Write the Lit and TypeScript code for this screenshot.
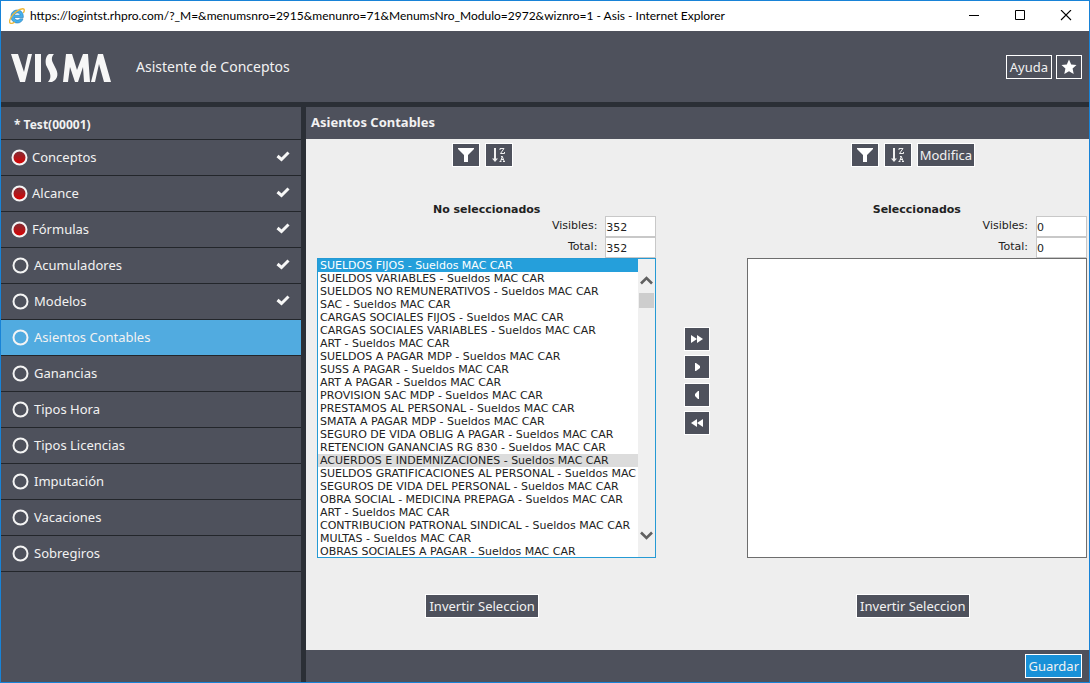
import { LitElement, html, css, svg, nothing } from "lit";
import { customElement, property, state } from "lit/decorators.js";
import { classMap } from "lit/directives/class-map.js";

const ACCOUNTS = [
  "SUELDOS FIJOS", "SUELDOS VARIABLES", "SUELDOS NO REMUNERATIVOS", "SAC",
  "CARGAS SOCIALES FIJOS", "CARGAS SOCIALES VARIABLES", "ART", "SUELDOS A PAGAR MDP",
  "SUSS A PAGAR", "ART A PAGAR", "PROVISION SAC MDP", "PRESTAMOS AL PERSONAL",
  "SMATA A PAGAR MDP", "SEGURO DE VIDA OBLIG A PAGAR", "RETENCION GANANCIAS RG 830",
  "ACUERDOS E INDEMNIZACIONES", "SUELDOS GRATIFICACIONES AL PERSONAL",
  "SEGUROS DE VIDA DEL PERSONAL", "OBRA SOCIAL - MEDICINA PREPAGA", "ART",
  "CONTRIBUCION PATRONAL SINDICAL", "MULTAS", "OBRAS SOCIALES A PAGAR",
].map((name) => `${name} - Sueldos MAC CAR`);

interface Step { name: string; required?: boolean; done?: boolean }

const STEPS: Step[] = [
  { name: "Conceptos", required: true, done: true },
  { name: "Alcance", required: true, done: true },
  { name: "Fórmulas", required: true, done: true },
  { name: "Acumuladores", done: true },
  { name: "Modelos", done: true },
  { name: "Asientos Contables" },
  { name: "Ganancias" },
  { name: "Tipos Hora" },
  { name: "Tipos Licencias" },
  { name: "Imputación" },
  { name: "Vacaciones" },
  { name: "Sobregiros" },
];

const buttonStyles = css`
  button {
    font: 13px/20px "Noto Sans", sans-serif;
    color: #f2f2f2;
    background: #4e515c;
    border: 1px solid #fff;
    border-radius: 0;
    margin: 0;
    padding: 1px 3px;
    height: 24px;
    display: flex;
    align-items: center;
    justify-content: center;
    white-space: nowrap;
  }
  button.tight { padding: 1px 2px; }
  svg { display: block; flex: none; }
`;

const filterIcon = svg`<svg width="16" height="16" viewBox="0 0 16 16" aria-hidden="true">
  <path d="M0 1h16v1L10 8v7H6V8L0 2z" fill="#fff"/></svg>`;

const sortIcon = svg`<svg width="16" height="18" viewBox="0 0 16 18" aria-hidden="true"
  fill="none" stroke="#f0f0f0">
  <path d="M4 2v11" stroke-width="2"/><path d="M1 12.500h6L4 16z" fill="#f0f0f0" stroke="none"/>
  <path d="M9 4V2.500h4L9.500 7.500h4V6"/>
  <path d="M8.500 15.500h2M12 15.500h2M9.500 15.500l1.800-5 2 5M10 13.500h3M10 10.500h1.500"/></svg>`;

@customElement("account-list")
class AccountList extends LitElement {
  static styles = [buttonStyles, css`
    :host { display: contents; }
    .tools { display: flex; justify-content: center; align-items: flex-start; gap: 5px; padding-top: 4px; }
    .tools .icon { width: 28px; padding: 0; }
    .body { padding: 0 2px 0 11px; min-width: 0; }
    .body.right { padding-left: 10px; }
    h2 { margin: 0; font-size: 11px; line-height: 13px; text-align: center; }
    .count { display: flex; justify-content: flex-end; gap: 8px; height: 21px; line-height: 19px; }
    .count input {
      box-sizing: border-box; width: 51px; height: 21px; padding: 2px 0 0; border: 1px solid #c8c8c8;
      border-radius: 0; background: #fff; color: #222; font: inherit;
    }
    .box { display: flex; box-sizing: border-box; height: 300px; border: 1px solid #6d6d6d; background: #fff; }
    .box.focused { border-color: #259ad4; }
    select {
      flex: 1; min-width: 0; height: 100%; margin: 0; padding: 0; border: 0; border-radius: 0; outline: 0;
      background: #fff; color: #222; font: inherit; overflow: hidden; scrollbar-width: none;
    }
    option { height: 13px; min-height: 0; line-height: 13px; padding: 0 2px; box-sizing: border-box; white-space: nowrap; overflow: hidden; }
    option:checked { background: #259fdb linear-gradient(#259fdb, #259fdb); color: #fff; }
    option.hover { background: #dcdcdc; }
    .track {
      flex: none; width: 17px; display: flex; flex-direction: column; align-items: center;
      justify-content: space-between; background: #f0f0f0; padding: 17px 0;
    }
    .up { display: flex; flex-direction: column; gap: 8px; align-items: center; }
    .thumb { width: 15px; height: 15px; background: #cdcdcd; }
    .foot { display: flex; justify-content: center; align-items: flex-start; padding-top: 36px; }
  `];

  @property() heading = "";
  @property() side = "left";
  @property({ type: Number }) total = 0;
  @property({ attribute: false }) items: string[] = [];

  private counter(label: string) {
    const id = label.toLowerCase();
    return html`<div class="count"><label for=${id}>${label}:</label>
      <input id=${id} type="text" readonly .value=${String(this.total)}></div>`;
  }

  render() {
    const right = this.side === "right";
    return html`
      <div class="tools" style="grid-area: ${this.side}-tools">
        <button class="icon" aria-label="Filtrar">${filterIcon}</button>
        <button class="icon" aria-label="Ordenar">${sortIcon}</button>
        ${right ? html`<button class="tight">Modifica</button>` : nothing}
      </div>
      <div class=${classMap({ body: true, right })} style="grid-area: ${this.side}-body">
        <h2 id="heading">${this.heading}</h2>
        ${this.counter("Visibles")}${this.counter("Total")}
        <div class=${classMap({ box: true, focused: !right })}>
          <select multiple size="23" aria-labelledby="heading">
            ${this.items.map((text, i) => html`<option class=${classMap({ hover: i === 15 })} ?selected=${i === 0}>${text}</option>`)}
          </select>
          ${right ? nothing : html`<div class="track" aria-hidden="true">
            <div class="up">
              <svg width="13" height="9" viewBox="0 0 13 9"><path d="M1 7.500L6.500 2 12 7.500" fill="none" stroke="#606060" stroke-width="2.600"/></svg>
              <div class="thumb"></div>
            </div>
            <svg width="13" height="9" viewBox="0 0 13 9"><path d="M1 1.500L6.500 7 12 1.500" fill="none" stroke="#606060" stroke-width="2.600"/></svg>
          </div>`}
        </div>
      </div>
      <div class="foot" style="grid-area: ${this.side}-foot"><button>Invertir Seleccion</button></div>`;
  }
}

@customElement("app-root")
class AppRoot extends LitElement {
  static styles = [buttonStyles, css`
    :host { display: block; font: 13px/20px "Noto Sans", sans-serif; color: #f2f2f2; }
    .window {
      box-sizing: border-box; min-height: 100vh; display: flex; flex-direction: column;
      border: 1px solid #1883d7; background: #2b2f36;
    }
    .titlebar { height: 30px; display: flex; align-items: center; background: #fff; color: #000; padding-left: 8px; }
    .titlebar .caption { flex: 1; min-width: 0; margin-left: 5px; font: 12px/16px Lato, sans-serif; white-space: nowrap; overflow: hidden; }
    .titlebar button { width: 46px; height: 30px; padding: 0; background: none; border: 0; }
    header { display: flex; align-items: center; gap: 24px; height: 71px; background: #4e515c; padding: 0 7px 0 9px; }
    header h1 { flex: 1; margin: 0; font-size: 14px; font-weight: 400; }
    .logo { padding-top: 2px; }
    .actions { display: flex; gap: 4px; }
    .actions .star { width: 26px; padding: 0; }
    .columns { flex: 1; display: flex; gap: 5px; padding-top: 5px; }
    nav { width: 300px; flex: none; background: #4e515c; }
    nav h2 { margin: 0; padding: 7px 13px 4px; font-size: 12px; line-height: 21px; border-bottom: 1px solid #23262b; }
    nav ul { list-style: none; margin: 0; padding: 0; }
    nav a {
      display: flex; align-items: center; gap: 5px; height: 35px; padding: 0 10px 0 11px;
      border-bottom: 1px solid #23262b; color: inherit; text-decoration: none;
    }
    nav a.required { gap: 4px; padding-left: 10px; }
    nav a.current { background: #51abe0; }
    nav a span { flex: 1; padding-bottom: 2px; }
    nav a .tick { padding-bottom: 2px; }
    main { flex: 1; min-width: 0; display: flex; flex-direction: column; background: #eee; }
    main > h2 { margin: 0; padding: 5px 5px 7px; background: #4e515c; font-size: 13px; line-height: 20px; }
    .transfer {
      flex: 1; display: grid; grid-template-columns: 9fr 2fr 9fr; grid-template-rows: 64px auto 1fr;
      grid-template-areas: "left-tools . right-tools" "left-body moves right-body" "left-foot . right-foot";
      font: 11px/13px "DejaVu Sans", sans-serif; color: #222;
    }
    .moves { grid-area: moves; display: flex; flex-direction: column; align-items: center; justify-content: center; gap: 4px; }
    .moves button { width: 26px; padding: 0; }
    footer { display: flex; justify-content: flex-end; background: #4e515c; padding: 4px 7px; }
    footer button { background: #1991d8; }
  `];

  @state() private current = 5;

  private arrow(label: string, left: boolean, double: boolean) {
    const points = left
      ? double ? ["M7 4v8L1 8z", "M13 4v8L7 8z"] : ["M9 4v8H8L5 9V7l3-3z"]
      : double ? ["M1 4v8l6-4z", "M7 4v8l6-4z"] : ["M5 4v8h1l4-3V7L6 4z"];
    return html`<button aria-label=${label}><svg width="14" height="16" viewBox="0 0 14 16">
      ${points.map((d) => svg`<path d=${d} fill="#fff"/>`)}</svg></button>`;
  }

  render() {
    return html`<div class="window">
      <div class="titlebar">
        <svg width="16" height="16" viewBox="0 0 16 16" aria-hidden="true">
          <path d="M14.300 9.500H5.400c.2 1.600 1.400 2.500 3.100 2.500 1.100 0 1.900-.4 2.400-1.200h3.100c-.8 2.700-2.900 4.200-5.600 4.200-3.800 0-6.400-2.600-6.400-6.500s2.600-6.500 6.400-6.500c3.900 0 6.200 3 5.900 7.500zM5.500 7.200h5.600c-.2-1.500-1.200-2.300-2.700-2.300s-2.600.8-2.900 2.300z" fill="#45aeea" stroke="#1b78b8" stroke-width=".6"/>
          <path d="M14.300 5c1.500-2.500 1.300-4.300-.6-4.200C10 1 4.500 5 2 9.500.5 12.200.2 14.400 1.400 15.200c1 .6 2.600 0 4.200-1.100" fill="none" stroke="#f0b93a" stroke-width="1.400"/>
        </svg>
        <span class="caption">https://logintst.rhpro.com/?_M=&amp;menumsnro=2915&amp;menunro=71&amp;MenumsNro_Modulo=2972&amp;wiznro=1 - Asis - Internet Explorer</span>
        <button aria-label="Minimizar"><svg width="12" height="12" viewBox="0 0 12 12"><path d="M1 5.500h10" stroke="#000"/></svg></button>
        <button aria-label="Maximizar"><svg width="12" height="12" viewBox="0 0 12 12"><path d="M1.500 .5h9v9h-9z" fill="none" stroke="#000"/></svg></button>
        <button aria-label="Cerrar"><svg width="12" height="12" viewBox="0 0 12 12"><path d="M1 0l10 10M11 0L1 10" stroke="#000" stroke-width="1.100"/></svg></button>
      </div>
      <header>
        <svg class="logo" width="102" height="28" viewBox="0 0 102 28" role="img" aria-label="Visma" fill="#f7f7f7">
          <path d="M1 0h7l6 18 4-18h4l-7 28h-5z"/>
          <path d="M25 0h6v28h-6z"/>
          <path d="M39 0h5c-2 2-3 5-1 9l3 6c3 6 1 11-4 13h-4c3-3 3-7 1-11l-3-6C35 6 36 2 39 0z"/>
          <path d="M56 0h6l5 16 6-16h5l2 28h-6l-1-15-5 15h-3l-5-15-2 15h-5z"/>
          <path d="M88 0h5l8 28h-7l-5-18-4 18h-4z"/>
        </svg>
        <h1>Asistente de Conceptos</h1>
        <div class="actions">
          <button>Ayuda</button>
          <button class="star" aria-label="Favoritos"><svg width="16" height="16" viewBox="0 0 16 16"><path d="M8 .5l2.200 4.900 5.300.6-3.900 3.600 1.100 5.400L8 12.300 3.300 15l1.100-5.400L.5 6l5.300-.6z" fill="#fff"/></svg></button>
        </div>
      </header>
      <div class="columns">
        <nav>
          <h2>* Test(00001)</h2>
          <ul>${STEPS.map((step, i) => html`<li>
            <a href="#" class=${classMap({ current: i === this.current, required: !!step.required })}
              @click=${(e: Event) => { e.preventDefault(); this.current = i; }}>
              <svg width="17" height="17" viewBox="0 0 17 17" aria-hidden="true">
                <defs><linearGradient id="red" x2="0" y2="1"><stop stop-color="#7a3038"/><stop offset="1" stop-color="#e00000"/></linearGradient></defs>
                <circle cx="8.500" cy="8.500" r="7" fill=${step.required ? "url(#red)" : "none"} stroke="#f4f4f4" stroke-width="2"/>
              </svg>
              <span>${step.name}</span>
              ${step.done ? html`<svg class="tick" width="16" height="14" viewBox="0 0 16 14" aria-hidden="true"><path d="M2.500 6L6.500 9.500 13.500 2.500" fill="none" stroke="#f7f7f7" stroke-width="3"/></svg>` : nothing}
            </a></li>`)}</ul>
        </nav>
        <main>
          <h2>Asientos Contables</h2>
          <div class="transfer">
            <account-list heading="No seleccionados" side="left" total="352" .items=${ACCOUNTS}></account-list>
            <div class="moves">
              ${this.arrow("Agregar todos", false, true)}
              ${this.arrow("Agregar", false, false)}
              ${this.arrow("Quitar", true, false)}
              ${this.arrow("Quitar todos", true, true)}
            </div>
            <account-list heading="Seleccionados" side="right" total="0" .items=${[]}></account-list>
          </div>
          <footer><button class="tight">Guardar</button></footer>
        </main>
      </div>
    </div>`;
  }
}
